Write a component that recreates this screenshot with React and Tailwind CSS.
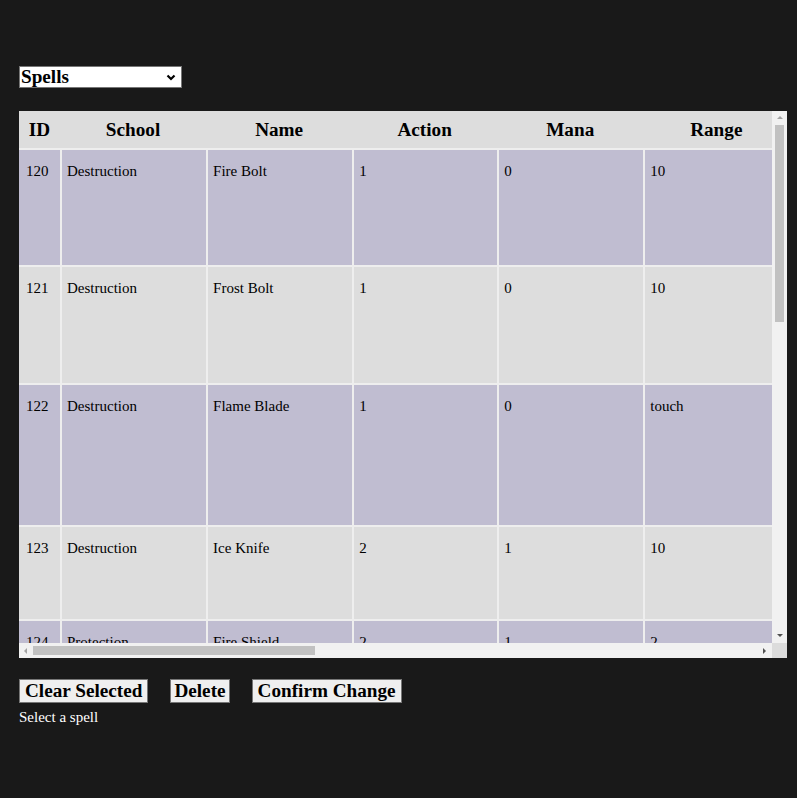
import { useState } from 'react'

const columns = [
  'ID',
  'School',
  'Name',
  'Action',
  'Mana',
  'Range',
  'Duration',
  'Target',
  'Area',
  'Damage',
  'Save',
  'Concentration',
  'Description',
  'Notes',
]

const spells = [
  { id: 120, school: 'Destruction', name: 'Fire Bolt', action: 1, mana: 0, range: '10', h: 'h-[117px]' },
  { id: 121, school: 'Destruction', name: 'Frost Bolt', action: 1, mana: 0, range: '10', h: 'h-[118px]' },
  { id: 122, school: 'Destruction', name: 'Flame Blade', action: 1, mana: 0, range: 'touch', h: 'h-[142px]' },
  { id: 123, school: 'Destruction', name: 'Ice Knife', action: 2, mana: 1, range: '10', h: 'h-[94px]' },
  { id: 124, school: 'Protection', name: 'Fire Shield', action: 2, mana: 1, range: '2', h: 'h-[118px]' },
  { id: 125, school: 'Protection', name: 'Mage Armor', action: 1, mana: 1, range: 'self', h: 'h-[118px]' },
  { id: 126, school: 'Protection', name: 'Ward', action: 2, mana: 2, range: '5', h: 'h-[142px]' },
  { id: 127, school: 'Restoration', name: 'Heal', action: 2, mana: 1, range: 'touch', h: 'h-[118px]' },
  { id: 128, school: 'Restoration', name: 'Cure Poison', action: 1, mana: 1, range: 'touch', h: 'h-[94px]' },
  { id: 129, school: 'Illusion', name: 'Blur', action: 1, mana: 1, range: 'self', h: 'h-[118px]' },
  { id: 130, school: 'Illusion', name: 'Invisibility', action: 2, mana: 2, range: 'touch', h: 'h-[130px]' },
]

function SpellRow({ spell, index, onSelect }) {
  const bg = index % 2 === 0 ? 'bg-[#c0bdd1]' : 'bg-[#dddddd]'
  const cell = `${bg} border-t-2 border-l-2 border-[#eeeeee] px-[5px] pt-[10px] align-top`
  const values = [spell.school, spell.name, spell.action, spell.mana, spell.range]
  return (
    <tr className={spell.h} onClick={() => onSelect(spell)}>
      <td className={`${bg} border-t-2 border-[#eeeeee] px-[7px] pt-[10px] align-top`}>{spell.id}</td>
      {values.map((v, i) => (
        <td key={i} className={cell}>
          {v}
        </td>
      ))}
      {columns.slice(6).map((c) => (
        <td key={c} className={cell}></td>
      ))}
    </tr>
  )
}

function Arrow({ dir, dark }) {
  const pts = {
    up: '1,5 4,2 7,5',
    down: '1,2 7,2 4,5',
    left: '5,1 5,7 2,4',
    right: '2,1 2,7 5,4',
  }[dir]
  return (
    <svg width="8" height="8" viewBox="0 0 8 8">
      <polygon points={pts} fill={dark ? '#505050' : '#a3a3a3'} />
    </svg>
  )
}

export default function App() {
  const [selected, setSelected] = useState(null)

  return (
    <div className="min-h-[798px] bg-[#191919] pl-[19px] pt-[66px] font-['Liberation_Serif',serif] text-[15px]">
      <div className="relative w-[163px]">
        <select className="block h-[22px] w-[163px] appearance-none border border-[#767676] bg-white pl-[1px] text-[19.2px] font-bold leading-none text-black">
          <option>Spells</option>
          <option>Items</option>
          <option>Creatures</option>
        </select>
        <svg className="pointer-events-none absolute right-[6px] top-[8px]" width="10" height="7" viewBox="0 0 10 7">
          <path d="M1.5 1.5 5 5l3.5-3.5" fill="none" stroke="#000" strokeWidth="2.2" />
        </svg>
      </div>

      <div className="mt-[23px] grid h-[547px] w-[768px] grid-cols-[753px_15px] grid-rows-[532px_15px] bg-[#f1f1f1]">
        <div className="overflow-hidden bg-[#dddddd]">
          <table className="w-[1939px] table-fixed border-separate border-spacing-0 text-black">
            <colgroup>
              <col className="w-[41px]" />
              <col className="w-[146px]" />
              <col className="w-[146px]" />
              <col className="w-[145px]" />
              {columns.slice(4).map((c) => (
                <col key={c} className="w-[146px]" />
              ))}
            </colgroup>
            <thead>
              <tr className="h-[37px]">
                {columns.map((c) => (
                  <th key={c} className="bg-[#dddddd] pt-[2px] text-center text-[19.2px] font-bold">
                    {c}
                  </th>
                ))}
              </tr>
            </thead>
            <tbody>
              {spells.map((s, i) => (
                <SpellRow key={s.id} spell={s} index={i} onSelect={setSelected} />
              ))}
            </tbody>
          </table>
        </div>

        <div className="flex flex-col items-center">
          <div className="flex h-[14px] items-center justify-center">
            <Arrow dir="up" />
          </div>
          <div className="flex-1 px-[3px]">
            <div className="h-[197px] w-[9px] bg-[#c1c1c1]" />
          </div>
          <div className="flex h-[14px] items-center justify-center">
            <Arrow dir="down" dark />
          </div>
        </div>

        <div className="flex items-center">
          <div className="flex w-[14px] items-center justify-center">
            <Arrow dir="left" />
          </div>
          <div className="flex flex-1 items-center">
            <div className="h-[9px] w-[282px] bg-[#c1c1c1]" />
          </div>
          <div className="flex w-[14px] items-center justify-center">
            <Arrow dir="right" dark />
          </div>
        </div>
        <div className="bg-[#dcdcdc]" />
      </div>

      <div className="mt-[21px] flex gap-[22px]">
        <button className="border border-[#767676] bg-[#efefef] px-[5px] text-[19.2px] font-bold leading-[22px] text-black">
          Clear Selected
        </button>
        <button className="border border-[#767676] bg-[#efefef] px-[3px] text-[19.2px] font-bold leading-[22px] text-black">
          Delete
        </button>
        <button className="border border-[#767676] bg-[#efefef] px-[5px] text-[19.2px] font-bold leading-[22px] text-black">
          Confirm Change
        </button>
      </div>
      <p className="mt-[3px] text-white">{selected ? selected.name : 'Select a spell'}</p>
    </div>
  )
}
